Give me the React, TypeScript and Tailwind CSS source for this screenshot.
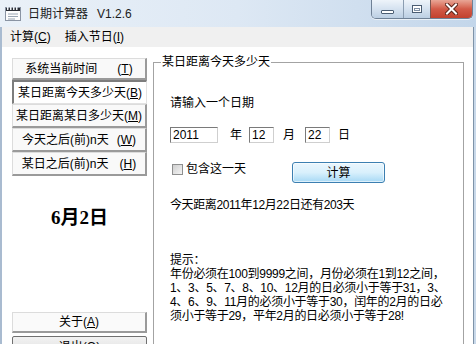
import clsx from 'clsx';

const ui = "font-['Liberation_Sans','Noto_Sans_CJK_SC',sans-serif]";

function Hot({ k }: { k: string }) {
  return (
    <span>
      (<span className="underline underline-offset-[1px]">{k}</span>)
    </span>
  );
}

function SideButton({
  text,
  hot,
  gap,
  pressed,
  height,
}: {
  text: string;
  hot: string;
  gap?: string;
  pressed?: boolean;
  height: string;
}) {
  return (
    <div
      className={clsx(
        'flex items-center justify-center text-[12px] leading-[14px] text-black whitespace-nowrap',
        height,
        pressed
          ? 'border-t-2 border-l-2 border-r border-b border-t-[#7d7d7d] border-l-[#7d7d7d] border-r-[#e2e2e2] border-b-[#e2e2e2] bg-white'
          : 'border-t border-l border-r-2 border-b-2 border-t-[#dcdcdc] border-l-[#dcdcdc] border-r-[#9a9a9a] border-b-[#9a9a9a] bg-[#f9f9f9]'
      )}
    >
      <span>{text}</span>
      <span className={gap}>
        <Hot k={hot} />
      </span>
    </div>
  );
}

function TitleIcon() {
  return (
    <svg width="16" height="14" viewBox="0 0 16 14">
      <rect x="0.5" y="0.5" width="15" height="13" fill="#fdfdfd" stroke="#8a94a3" />
      <rect x="1" y="1" width="14" height="3" fill="#2b2f36" />
      {[2, 5, 8, 11].map((x) => (
        <rect key={x} x={x} y="0" width="1.5" height="3" fill="#eef2f6" />
      ))}
      <line x1="3" y1="7" x2="13" y2="7" stroke="#9aa6b4" />
      <line x1="3" y1="9.5" x2="13" y2="9.5" stroke="#9aa6b4" />
      <line x1="3" y1="12" x2="10" y2="12" stroke="#9aa6b4" />
    </svg>
  );
}

function WindowControls() {
  return (
    <div className="flex h-[19px] self-start rounded-b-[5px] border border-t-0 border-[#6f8196] overflow-hidden shadow-[0_1px_0_rgba(255,255,255,0.6)]">
      <div className="w-[32px] flex items-center justify-center bg-gradient-to-b from-[#eef4fa] via-[#d5e2f0] to-[#bccfe3] border-r border-[#8b9db1]">
        <div className="w-[13px] h-[4px] mt-[5px] bg-white border border-[#4b5d73] rounded-[1px]" />
      </div>
      <div className="w-[27px] flex items-center justify-center bg-gradient-to-b from-[#eef4fa] via-[#d5e2f0] to-[#bccfe3] border-r border-[#7b5750]">
        <div className="w-[10px] h-[8px] border border-[#4b5d73] bg-white flex items-center justify-center">
          <div className="w-[6px] h-[3px] border border-[#7d8ea3]" />
        </div>
      </div>
      <div className="w-[41px] flex items-center justify-center bg-gradient-to-b from-[#e8a696] via-[#d25a47] to-[#c2412d]">
        <svg width="13" height="12" viewBox="0 0 13 12">
          <path d="M2 1.5 L11 10.5 M11 1.5 L2 10.5" stroke="#5a2318" strokeWidth="4" strokeLinecap="square" />
          <path d="M2 1.5 L11 10.5 M11 1.5 L2 10.5" stroke="#ffffff" strokeWidth="2" strokeLinecap="square" />
        </svg>
      </div>
    </div>
  );
}

export default function App() {
  return (
    <div className={clsx('w-[476px] h-[344px] overflow-hidden bg-[#c9d9ea] flex flex-col', ui)}>
      {/* title bar */}
      <div className="h-[27px] shrink-0 flex bg-gradient-to-r from-[#eaf1f8] via-[#dde8f4] to-[#c3d6ea] pr-[3px]">
        <div className="flex items-center pl-[5px] h-full">
          <TitleIcon />
          <span className="ml-[7px] text-[12px] leading-[14px] text-[#1b1b1b]">日期计算器</span>
          <span className="ml-[9px] text-[12px] leading-[14px] text-[#1b1b1b]">V1.2.6</span>
        </div>
        <div className="ml-auto self-start">
          <WindowControls />
        </div>
      </div>

      {/* client */}
      <div className="w-[474px] flex-1 flex flex-col border-l-2 border-r border-l-[#a9bbd0] border-r-[#7f93a8] bg-white">
        <div className="h-[20px] shrink-0 flex items-center bg-[#f0f0f0] text-[12px] leading-[14px] text-black">
          <span className="ml-[8px]">
            计算<Hot k="C" />
          </span>
          <span className="ml-[14px]">
            插入节日<Hot k="I" />
          </span>
        </div>

        <div className="flex flex-1">
          {/* left column */}
          <div className="w-[145px] pl-[10px] pt-[11px] flex flex-col">
            <SideButton text="系统当前时间" hot="T" gap="ml-[20px]" height="h-[22px]" />
            <SideButton text="某日距离今天多少天" hot="B" pressed height="h-[24px]" />
            <SideButton text="某日距离某日多少天" hot="M" height="h-[24px]" />
            <SideButton text="今天之后(前)n天" hot="W" gap="ml-[8px]" height="h-[24px]" />
            <SideButton text="某日之后(前)n天" hot="H" gap="ml-[11px]" height="h-[24px]" />

            <div className="mt-[30px] h-[24px] flex items-center justify-center text-[19px] font-bold text-black font-['Liberation_Serif','Noto_Sans_CJK_SC',serif]">
              6月2日
            </div>

            <div className="mt-[82px] h-[21px] flex items-center justify-center text-[12px] leading-[14px] border-t border-l border-r-2 border-b-2 border-t-[#dcdcdc] border-l-[#dcdcdc] border-r-[#9a9a9a] border-b-[#9a9a9a] bg-[#fafafa]">
              关于<Hot k="A" />
            </div>
            <div className="mt-[3px] h-[22px] shrink-0 flex items-center justify-center text-[12px] leading-[14px] rounded-t-[2px] border border-[#707070] bg-gradient-to-b from-[#f2f2f2] to-[#dddddd]">
              退出<Hot k="Q" />
            </div>
          </div>

          {/* group box */}
          <div className="relative ml-[6px] mt-[15px] w-[311px] h-[300px] border border-[#a3a3a3] pl-[16px] text-[12px] leading-[14px] text-black">
            <span className="absolute -top-[8px] left-[7px] bg-white px-[1px] leading-[14px]">某日距离今天多少天</span>

            <div className="mt-[33px]">请输入一个日期</div>

            <div className="mt-[17px] flex items-center h-[16px]">
              <div className="w-[48px] h-[16px] border border-t-[#7a7a7a] border-l-[#7a7a7a] border-r-[#cfcfcf] border-b-[#cfcfcf] pl-[2px] flex items-center">
                2011
              </div>
              <span className="ml-[12px]">年</span>
              <div className="ml-[7px] w-[25px] h-[16px] border border-t-[#7a7a7a] border-l-[#7a7a7a] border-r-[#cfcfcf] border-b-[#cfcfcf] pl-[2px] flex items-center">
                12
              </div>
              <span className="ml-[9px]">月</span>
              <div className="ml-[10px] w-[25px] h-[16px] border border-t-[#7a7a7a] border-l-[#7a7a7a] border-r-[#cfcfcf] border-b-[#cfcfcf] pl-[2px] flex items-center">
                22
              </div>
              <span className="ml-[8px]">日</span>
            </div>

            <div className="mt-[19px] flex items-start">
              <div className="w-[122px] h-[14px] flex items-center">
                <div className="ml-[2px] w-[11px] h-[11px] border border-[#8e8f8f] bg-gradient-to-br from-[#cfcfcf] to-[#f4f4f4]" />
                <span className="ml-[3px]">包含这一天</span>
              </div>
              <div className="w-[93px] h-[21px] rounded-[3px] border border-[#3c7fb1] bg-gradient-to-b from-[#eaf6fd] via-[#d9f0fc] to-[#a7d9f5] flex items-center justify-center shadow-[inset_0_0_0_1px_rgba(255,255,255,0.6)]">
                计算
              </div>
            </div>

            <div className="mt-[15px] whitespace-nowrap tracking-[-0.4px]">今天距离2011年12月22日还有203天</div>

            <div className="mt-[41px] whitespace-nowrap tracking-[-0.3px]">
              <div>提示：</div>
              <div>年份必须在100到9999之间，月份必须在1到12之间，</div>
              <div>1、3、5、7、8、10、12月的日必须小于等于31，3、</div>
              <div>4、6、9、11月的必须小于等于30，闰年的2月的日必</div>
              <div>须小于等于29，平年2月的日必须小于等于28!</div>
            </div>
          </div>
        </div>
      </div>
    </div>
  );
}
